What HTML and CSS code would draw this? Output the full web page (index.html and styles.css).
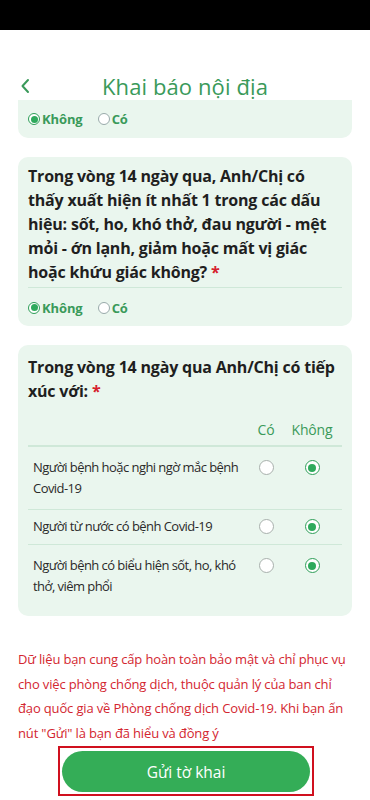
FILE: index.html
```html
<!DOCTYPE html>
<html lang="vi">
<head>
<meta charset="utf-8">
<link rel="stylesheet" href="styles.css">
</head>
<body>
<div class="statusbar"></div>
<header class="header">
  <span class="back"><svg width="10" height="16" viewBox="0 0 10 16"><path d="M8 2 L2.5 8 L8 14" fill="none" stroke="#3a9a5a" stroke-width="2" stroke-linecap="round" stroke-linejoin="round"/></svg></span>
  <h1 class="title">Khai báo nội địa</h1>
</header>
<main class="content">
  <section class="card card-cut">
    <div class="options">
      <label class="opt"><span class="radio on"></span>Không</label>
      <label class="opt"><span class="radio"></span>Có</label>
    </div>
  </section>
  <section class="card card-q">
    <p class="q">Trong vòng 14 ngày qua, Anh/Chị có thấy xuất hiện ít nhất 1 trong các dấu hiệu: sốt, ho, khó thở, đau người - mệt mỏi - ớn lạnh, giảm hoặc mất vị giác hoặc khứu giác không? <span class="req">*</span></p>
    <div class="options options-div">
      <label class="opt"><span class="radio on"></span>Không</label>
      <label class="opt"><span class="radio"></span>Có</label>
    </div>
  </section>
  <section class="card card-table">
    <p class="q">Trong vòng 14 ngày qua Anh/Chị có tiếp xúc với: <span class="req">*</span></p>
    <div class="grid head">
      <span></span><span class="col">Có</span><span class="col">Không</span>
    </div>
    <div class="grid row tall">
      <span class="lbl">Người bệnh hoặc nghi ngờ mắc bệnh Covid-19</span><span class="cell"><span class="rb"></span></span><span class="cell"><span class="rb on"></span></span>
    </div>
    <div class="grid row">
      <span class="lbl">Người từ nước có bệnh Covid-19</span><span class="cell"><span class="rb"></span></span><span class="cell"><span class="rb on"></span></span>
    </div>
    <div class="grid row tall last">
      <span class="lbl">Người bệnh có biểu hiện sốt, ho, khó thở, viêm phổi</span><span class="cell"><span class="rb"></span></span><span class="cell"><span class="rb on"></span></span>
    </div>
  </section>
  <p class="notice">Dữ liệu bạn cung cấp hoàn toàn bảo mật và chỉ phục vụ cho việc phòng chống dịch, thuộc quản lý của ban chỉ đạo quốc gia về Phòng chống dịch Covid-19. Khi bạn ấn nút "Gửi" là bạn đã hiểu và đồng ý</p>
  <div class="btnwrap">
    <div class="hl"><button class="submit">Gửi tờ khai</button></div>
  </div>
</main>
</body>
</html>
```
FILE: styles.css
```css
* { box-sizing: border-box; }
html, body { margin: 0; padding: 0; background: #fff; }
body { font-family: "Open Sans", "Noto Sans", sans-serif; color: #222; width: 370px; height: 800px; overflow: hidden; }
.statusbar { height: 30px; background: #000; }
.header { height: 70px; display: flex; align-items: flex-end; padding: 0 18px; }
.back { display: flex; align-items: center; height: 28px; width: 20px; padding-left: 2px; }
.title { margin: 0 0 0 64px; font-size: 22px; line-height: 28px; font-weight: 500; color: #3a9a5a; letter-spacing: 0.1px; }
.content { padding: 0 18px; }
.card { background: #eaf6ee; border-radius: 10px; margin-bottom: 19px; }
.card-cut { border-radius: 0 0 10px 10px; padding: 8px 10px; }
.card-q { padding: 7px 10px 0 10px; }
.q { margin: 0; font-size: 16px; line-height: 24px; font-weight: 700; color: #1f1f1f; letter-spacing: -0.2px; }
.req { color: #d6202b; }
.options { display: flex; align-items: center; height: 22px; gap: 15px; }
.options-div { border-top: 1.5px solid #cfe8d8; margin-top: 3px; height: 39px; padding-top: 1px; }
.opt { display: flex; align-items: center; font-size: 13px; font-weight: 700; color: #3a9a5a; gap: 2px; letter-spacing: -0.1px; }
.radio { width: 12px; height: 12px; border: 1px solid #9aa; border-radius: 50%; display: inline-block; background: #fff; position: relative; }
.radio.on { border-color: #2e9e58; }
.radio.on::after { content: ""; position: absolute; left: 1.5px; top: 1.5px; width: 7px; height: 7px; border-radius: 50%; background: #2eaa5c; }
.card-table { padding: 10px 10px 9px 10px; margin-bottom: 0; }
.grid { display: grid; grid-template-columns: 1fr 42px 50px; padding: 0 5px; }
.head { margin-top: 14px; height: 30px; align-items: center; padding-bottom: 3px; border-bottom: 2px solid #cfe8d8; font-size: 14px; color: #3a9a5a; letter-spacing: -0.2px; }
.col { text-align: center; }
.row { border-bottom: 1px solid #cfe8d8; padding: 6px 5px 7px 5px; align-items: start; }
.row.tall { padding: 10px 5px 10px 5px; }
.row.last { border-bottom: none; }
.lbl { font-size: 13px; line-height: 21px; color: #2a2a2a; padding-right: 2px; letter-spacing: -0.55px; }
.cell { display: flex; justify-content: center; padding-top: 3px; }
.rb { width: 15px; height: 15px; border: 1px solid #a8b0ac; border-radius: 50%; background: #fff; position: relative; display: inline-block; }
.rb.on { border-color: #2e9e58; }
.rb.on::after { content: ""; position: absolute; left: 2.5px; top: 2.5px; width: 8px; height: 8px; border-radius: 50%; background: #2eaa5c; }
.notice { margin: 31px 0 0 0; font-size: 13px; line-height: 24.5px; color: #d32630; letter-spacing: -0.15px; }
.btnwrap { display: flex; justify-content: center; margin-top: 1px; }
.hl { border: 2px solid #d0101e; padding: 3px 2px 2px 2px; width: 256px; margin-left: 2px; }
.submit { width: 248px; height: 41px; border: none; border-radius: 21px; background: #34ad57; color: #fff; font-family: "Open Sans", sans-serif; font-size: 15.5px; display: block; padding: 0; }
```
